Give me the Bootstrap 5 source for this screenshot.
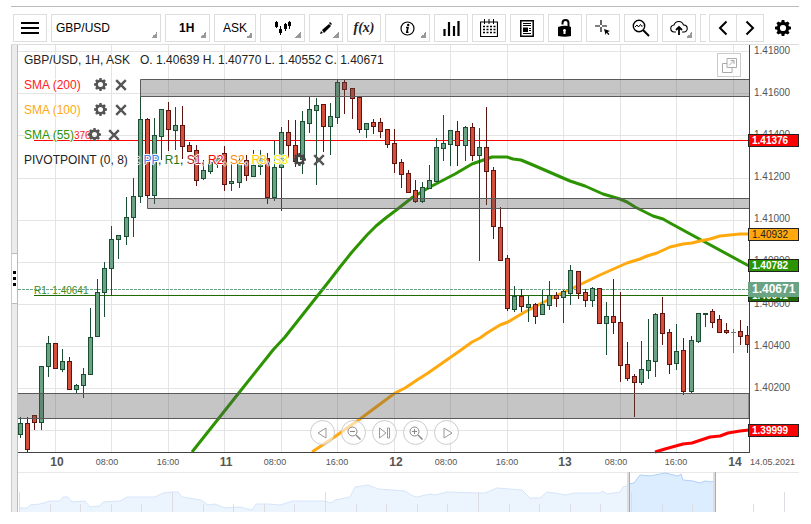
<!DOCTYPE html>
<html lang="en">
<head>
<meta charset="utf-8">
<meta name="viewport" content="width=device-width, initial-scale=1">
<title>GBP/USD chart</title>
<link href="https://cdn.jsdelivr.net/npm/bootstrap@5.3.0/dist/css/bootstrap.min.css" rel="stylesheet">
<style>
body{font-family:"Liberation Sans",Arial,sans-serif;font-size:12px;line-height:14px;color:#222;background:#fff}
.app{margin:6px 12px 0 11px;border-top:1px solid #bbb}
.bar{padding:7px 0 2px 2px;border-bottom:1px solid #ddd}
.tools{gap:4px;min-width:0}
.tool{flex:none;width:34px;height:28px;border:1px solid #ddd;background-color:#fff;padding:0;font-size:12px;color:#000;border-radius:0;display:flex;align-items:center;justify-content:center}
.tool svg{display:block}
.drop{background-image:linear-gradient(135deg,transparent 50%,#999 50%);background-repeat:no-repeat;background-position:right 3px bottom 3px;background-size:6px 6px}
select.tool{appearance:none;cursor:pointer}
.w-pair{width:110px;padding-left:4px}
.w-period{width:45px;padding-left:13px;font-weight:700}
.w-side{width:42px;padding-left:8px}
.w-wide{width:45px}
.fx{font:italic 700 14px "Liberation Serif",serif;color:#222}
.pager{margin-left:3px}
.pager .tool{width:28px}
.pager .tool+.tool{border-left:0;width:27px}
.gear-btn{border:0;background:none;padding:0;margin:0 8px 0 11px;width:16px;height:28px;display:flex;align-items:center}
.side{width:7px;background:#ececec;border-left:1px solid #ccc;border-right:1px solid #bbb}
.grip{width:5px;height:51px;border:0;border-top:1px solid #bbb;border-bottom:1px solid #bbb;background:#fff;padding:0;gap:3px;display:flex;flex-direction:column;align-items:center;justify-content:center}
.grip i{width:3px;height:3px;background:#000}
.chart{display:block;width:100%;height:auto}
.legend{left:6px;top:2px}
.legend .line{height:25px;display:flex;align-items:center;white-space:pre;text-shadow:1px 0 #fff,-1px 0 #fff,0 1px #fff,0 -1px #fff,0 0 2px #fff,0 0 2px #fff}
.legend button{border:0;background:none;padding:0;width:14px;height:14px;display:flex;align-items:center;justify-content:center}
.legend .acts{display:flex;gap:6px}
.g13{gap:13px}.g5{gap:4px}.g9{gap:9px}
.sma-r{color:#f22}.sma-o{color:#ffa90e}.sma-g{color:#2c9400}
.pp{color:#3c80ee}.r1{color:#277310}.s1{color:#b22020}.r2{color:#f00}.s2{color:#ff8c00}.r3{color:#ffc800}.s3{color:#fff000}
.pop{top:8px;right:58px;width:24px;height:24px;border:1px solid #ccc;background:#fffc;padding:0;display:flex;align-items:center;justify-content:center}
.play{left:0;right:48px;bottom:67px;gap:6px}
.play button{width:25px;height:25px;border:1px solid #ccc;border-radius:50%;background:#fff9;padding:0;display:flex;align-items:center;justify-content:center}
</style>
<script src="https://cdn.jsdelivr.net/npm/bootstrap@5.3.0/dist/js/bootstrap.bundle.min.js"></script>
</head>
<body>
<svg class="d-none" xmlns="http://www.w3.org/2000/svg">
<symbol id="gear" viewBox="0 0 16 16"><path fill-rule="evenodd" d="M6.700 0h2.600l.4 2.100 1.200.5L12.700 1.400l1.900 1.900-1.200 1.800.5 1.200 2.100.4v2.600l-2.100.4-.5 1.200 1.200 1.800-1.900 1.900-1.800-1.200-1.200.5-.4 2.100H6.700l-.4-2.100-1.200-.5-1.800 1.200-1.900-1.900 1.200-1.800-.5-1.200L0 9.300V6.700l2.100-.4.5-1.200L1.400 3.300l1.900-1.900 1.800 1.200 1.200-.5zM8 4.900a3.100 3.100 0 1 0 0 6.200 3.100 3.100 0 0 0 0-6.200z"/></symbol>
<symbol id="cross" viewBox="0 0 12 12"><path d="M1.200 1.200l9.600 9.600M10.800 1.200L1.200 10.800" stroke="#555" stroke-width="2.400"/></symbol>
</svg>
<div class="app">
<header class="bar d-flex align-items-center">
<div class="tools d-flex flex-grow-1 overflow-hidden">
<button class="tool" aria-label="Menu"><svg width="18" height="14"><path d="M0 2h18M0 7h18M0 12h18" stroke="#000" stroke-width="2"/></svg></button>
<select class="tool drop w-pair" aria-label="Instrument"><option>GBP/USD</option></select>
<select class="tool drop w-period" aria-label="Period"><option>1H</option></select>
<select class="tool drop w-side" aria-label="Price side"><option>ASK</option></select>
<button class="tool drop w-wide" aria-label="Chart type"><svg width="18" height="14"><path d="M2.500 0v7M6.500 5v9M11.500 2v8M15.500 0v8" stroke="#000"/><path d="M1 1h3v5H1zM5 8h3v4H5zM10 3h3v5h-3zM14 1h3v4h-3z"/></svg></button>
<button class="tool drop" aria-label="Draw"><svg width="14" height="14"><path d="M1 13l1-3 2 2zM3 9l7-6 2 2-7 7z"/><path d="M10 2l1-1 2 2-1 1z"/></svg></button>
<button class="tool" aria-label="Functions"><em class="fx">f(x)</em></button>
<button class="tool drop w-wide" aria-label="Information"><svg width="15" height="15" viewBox="0 0 15 15"><circle cx="7.500" cy="7.500" r="6.500" fill="none" stroke="#000" stroke-width="1.200"/><path d="M6 6.500h2L6.800 11.200h1.700" fill="none" stroke="#000" stroke-width="1.600"/><circle cx="8.200" cy="3.900" r="1.200"/></svg></button>
<button class="tool" aria-label="Volume"><svg width="18" height="18"><path d="M2.500 10v7M7 3v14M12 7v10M16.500 2v15" stroke="#000" stroke-width="2.200"/></svg></button>
<button class="tool" aria-label="Calendar"><svg width="18" height="18"><path d="M.5 3h17v14.500H.5z" fill="none" stroke="#000" stroke-width="1.200"/><path d="M4.500 0v5M9 0v5M13.500 0v5" stroke="#000"/><path d="M3 7.500h13M3 10.500h13M3 13.500h13" stroke="#000" stroke-width="1.500" stroke-dasharray="2 1.500"/></svg></button>
<button class="tool" aria-label="News"><svg width="14" height="17"><path d="M.8.8h12.400v15.400H.8z" fill="none" stroke="#000" stroke-width="1.500"/><path d="M3 3.500h8M3 5.500h8M9 8.500h2M9 10.500h2M3 13.500h8" stroke="#000"/><path d="M3 7.500h5v4.500H3z"/></svg></button>
<button class="tool" aria-label="Unlock"><svg width="14" height="18"><path fill-rule="evenodd" d="M0 8q7-2.500 13 0v9q-6 1.500-13 0zM6.500 10a1.500 1.500 0 0 0-1 2.600V15h2v-2.400a1.500 1.500 0 0 0-1-2.600z"/><path d="M10.500 8V4a3 3 0 0 0-6 0V5.500" fill="none" stroke="#000" stroke-width="2"/></svg></button>
<button class="tool" aria-label="Crosshair"><svg width="16" height="16"><path d="M6 0v5M6 7v5M0 6h5M7 6h5" stroke="#000" stroke-width="1.200"/><path d="M9 9l6 2-2.400.9 1.900 2.300-1 .8-2-2.300L10.600 15z"/></svg></button>
<button class="tool" aria-label="Scan"><svg width="18" height="18"><circle cx="7" cy="7" r="5.700" fill="none" stroke="#000" stroke-width="1.400"/><path d="M3 8l2-2 1.500 2L8.500 5.500 10 7.500l1-1" fill="none" stroke="#000"/><path d="M11 11l6 6" stroke="#000" stroke-width="2"/></svg></button>
<button class="tool drop" aria-label="Upload"><svg width="18" height="16"><path d="M6 12H4.500A3.500 3.500 0 0 1 4 5a5 5 0 0 1 9.500 0 3.500 3.500 0 0 1 .5 7h-2" fill="none" stroke="#000" stroke-width="1.100"/><path d="M9 15V8M6 10l3-3 3 3" fill="none" stroke="#000" stroke-width="1.800"/></svg></button>
<button class="tool" aria-label="More"></button>
</div>
<div class="pager d-flex">
<button class="tool" aria-label="Previous"><svg width="10" height="16"><path d="M8.500 1.500L2 8l6.500 6.500" fill="none" stroke="#000" stroke-width="2"/></svg></button>
<button class="tool" aria-label="Next"><svg width="10" height="16"><path d="M1.500 1.500L8 8l-6.500 6.500" fill="none" stroke="#000" stroke-width="2"/></svg></button>
</div>
<button class="gear-btn" aria-label="Settings"><svg width="16" height="16"><use href="#gear"/></svg></button>
</header>
<main class="d-flex">
<div class="side d-flex align-items-center"><button class="grip" aria-label="Expand panel"><i></i><i></i><i></i></button></div>
<div class="position-relative flex-grow-1">
<svg class="chart" viewBox="18 45 781 467" font-family="Liberation Sans, Arial, sans-serif" role="img" aria-label="GBP/USD hourly candles">
<g id="grid"></g>
<path d="M34 140.500H749" stroke="#f00"/><text x="74" y="139" font-size="10" fill="#f22">376</text>
<path d="M34 295.500H749" stroke="#1f6a04"/>
<text x="34" y="294" font-size="10" fill="#3c8a20">R1. 1.40641</text>
<g fill="none" stroke-width="3" stroke-linejoin="round">
<path stroke="#2c9400" d="M192 452L238 394 273 350 285 337 315 299 330 280 340 267 352 252 367 235 376 226 387 217 395 211 413 197 430 187 455 174 472 164 492 157H507L513 159 521 160 533 165 570 181 585 186 603 194 620 199 627 202 635 207 653 216 663 219 670 223 749 266"/>
<path stroke="#ffa90e" d="M312 452L333 438 360 419 395 393 405 388 417 380 428 373 461 350 472 342 480 338 487 333 500 325 508 322 523 313 540 304 560 294 573 288 600 275 627 263 640 259 647 256 657 253 670 247 683 244 692 243 700 241 710 239 720 236 740 234H749"/>
<path stroke="#f00" d="M655 452L665 449 683 444 692 443 710 437 720 436 728 433 740 431 749 430"/>
</g>
<path d="M18 289.500H749" stroke="#6aa384" stroke-dasharray="3 1"/>
<g id="candles"></g>
<g fill="#555" fill-opacity=".34" stroke="#5a5a5a"><path d="M749 79.500H140.500V96.500H749"/><path d="M749 198.500H147.500V208.500H749"/><path d="M18 393.500H749V418.500H18"/></g>
<path d="M749.500 45V452.500M18 452.500H750" stroke="#444"/>
<g id="labels" fill="#555"></g>
<g id="tags"></g>
<g id="overview"></g>
</svg>
<div class="legend position-absolute">
<div class="line">GBP/USD, 1H, ASK   O. 1.40639 H. 1.40770 L. 1.40552 C. 1.40671</div>
<div class="line g13 sma-r"><span>SMA (200)</span><span class="acts"><button aria-label="Set up SMA 200"><svg width="13" height="13" fill="#555"><use href="#gear"/></svg></button><button aria-label="Remove SMA 200"><svg width="12" height="12"><use href="#cross"/></svg></button></span></div>
<div class="line g13 sma-o"><span>SMA (100)</span><span class="acts"><button aria-label="Set up SMA 100"><svg width="13" height="13" fill="#555"><use href="#gear"/></svg></button><button aria-label="Remove SMA 100"><svg width="12" height="12"><use href="#cross"/></svg></button></span></div>
<div class="line g13 sma-g"><span>SMA (55)</span><span class="acts"><button aria-label="Set up SMA 55"><svg width="13" height="13" fill="#555"><use href="#gear"/></svg></button><button aria-label="Remove SMA 55"><svg width="12" height="12"><use href="#cross"/></svg></button></span></div>
<div class="line g9"><span>PIVOTPOINT (0, 8)</span><span class="d-flex g5 align-items-center"><span>: <span class="pp">PP</span>, <span class="r1">R1</span>, <span class="s1">S1</span>, <span class="r2">R2</span>, <span class="s2">S2</span>, <span class="r3">R3</span>, <span class="s3">S3</span></span><span class="acts"><button aria-label="Set up pivot points"><svg width="13" height="13" fill="#444"><use href="#gear"/></svg></button><button aria-label="Remove pivot points"><svg width="12" height="12"><use href="#cross"/></svg></button></span></span></div>
</div>
<button class="pop position-absolute" aria-label="Detach chart"><svg width="15" height="15" fill="none" stroke="#aaa"><path d="M5 .5h9.500v9H5zM5 5.500H.5v9H10v-5M7 7.500l5-5M8.500 2.500H12V6"/></svg></button>
<div class="play position-absolute d-flex justify-content-center">
<button aria-label="Back"><svg width="12" height="12" fill="none" stroke="#999"><path d="M9 1v10L1 6z"/></svg></button>
<button aria-label="Zoom out"><svg width="14" height="14" fill="none" stroke="#888"><circle cx="5.500" cy="5.500" r="4.500"/><path d="M3 5.500h5"/><path d="M9 9l4.500 4.500" stroke-width="1.500"/></svg></button>
<button aria-label="Latest"><svg width="12" height="12" fill="none" stroke="#999"><path d="M.5 1v10L7 6zM8.500 1h2v10h-2z"/></svg></button>
<button aria-label="Zoom in"><svg width="14" height="14" fill="none" stroke="#888"><circle cx="5.500" cy="5.500" r="4.500"/><path d="M3 5.500h5M5.500 3v5"/><path d="M9 9l4.500 4.500" stroke-width="1.500"/></svg></button>
<button aria-label="Forward"><svg width="12" height="12" fill="none" stroke="#999"><path d="M3 1v10l8-5z"/></svg></button>
</div>
</div>
</main>
</div>
<script>
const put=(id,s)=>document.getElementById(id).innerHTML=s;
// Grid
let g='';
[51,93,135,178,220,262,304,346,388,430].forEach(y=>g+=`<path d="M18 ${y}.5H749"/>`);
[55,111,168,224,281,337,394,450,507,563,620,676,733].forEach(x=>g+=`<path d="M${x}.5 45V452"/>`);
put('grid',`<g stroke="#e4e4e4">${g}</g>`);
// Candles: direction, high, body top, body bottom, low
const data=`g417,423,435,438 r417,423,450,452 r415,415,423,430 g366,366,423,430 g336,343,367,377 r343,343,369,369 g349,361,370,372 r357,361,390,390 g384,385,390,393 g368,374,386,398
g308,337,375,375 g279,292,337,337 g262,268,293,317 g226,239,269,295 g235,235,240,259 g197,217,237,245 g178,196,218,237 g96,119,197,203 r118,119,196,198 g118,135,196,204
g109,109,137,160 r102,110,130,151 g107,125,131,150 r106,125,147,159 r142,145,152,152 r145,150,181,186 g160,170,179,180 g158,162,172,174 g155,158,165,168 r146,153,185,191
g164,181,184,191 g155,160,183,188 r155,160,176,181 g150,165,177,177 g150,158,167,175 r153,158,198,204 g141,167,198,201 g127,132,168,211 r120,132,146,158 r120,145,162,167
g111,121,160,174 g97,109,124,133 g98,105,111,185 r104,104,127,152 g103,116,127,155 g80,82,118,124 r80,82,90,114 r88,88,99,119 r97,97,130,133 g123,123,130,138
r119,122,127,134 r118,122,132,138 r129,129,145,148 r129,143,164,173 r159,162,175,188 r170,173,193,193 r180,190,202,203 g182,187,202,203 g165,180,189,189 g138,147,182,182
g115,143,149,161 g130,130,145,166 r121,131,146,166 g126,127,146,161 r123,127,156,161 g128,147,156,261 r107,147,172,205 r167,170,227,239 r207,227,261,261 r255,258,309,311
g286,296,310,312 r289,296,307,312 g296,304,308,322 r303,304,317,324 g290,304,315,315 g281,295,306,310 r292,295,299,307 g290,291,298,323 g265,270,294,305 r271,271,294,299
r289,292,301,307 g287,288,301,307 r288,288,324,324 g302,316,324,355 r279,316,323,334 r292,322,366,382 r342,364,379,381 r374,376,383,417 g341,369,383,385 g319,360,371,379
g313,314,362,377 r297,313,334,345 r329,332,365,374 g324,351,364,370 r338,350,392,395 g336,340,392,393 g313,313,342,343 g313,313,315,327 r309,311,323,328 r315,319,333,333
r323,330,333,334 n329,332,333,353 r320,331,337,345 r326,335,345,353`.split(/\s+/);
const ink={g:['#6aa384','#1b4d33'],r:['#d44e3c','#5e1410'],n:['#777','#777']};
put('candles',data.map((d,i)=>{
const [f,s]=ink[d[0]],[h,t,b,l]=d.slice(1).split(',').map(Number),x=20+7*i+Math.floor((i+1)/16);
const w=`<path d="M${x}.5 ${h}V${l}" stroke="${s}"/>`;
if(d[0]==='n')return w+`<path d="M${x-2} 332.5H${x+3}" stroke="${s}"/>`;
const wd=Math.min(4,749-x+1.5);
return w+`<rect x="${x-1.5}" y="${t+.5}" width="${wd}" height="${b-t-1}" fill="${f}" stroke="${s}"/>`;
}).join(''));
// Axis labels
let a='';
[[54,'1.41800'],[96,'1.41600'],[138,'1.41400'],[180,'1.41200'],[222,'1.41000'],[264,'1.40800'],[307,'1.40600'],[349,'1.40400'],[391,'1.40200']].forEach(([y,t])=>a+=`<text x="754" y="${y}" font-size="10">${t}</text>`);
[[57,'10'],[107,'08:00'],[168,'16:00'],[226,'11'],[275,'08:00'],[337,'16:00'],[396,'12'],[446,'08:00'],[507,'16:00'],[565,'13'],[616,'08:00'],[676,'16:00'],[735,'14']].forEach(([x,t])=>a+=t.length<3?`<text x="${x}" y="466" font-size="12" font-weight="700" text-anchor="middle">${t}</text>`:`<text x="${x}" y="465" font-size="9" text-anchor="middle">${t}</text>`);
put('labels',a+'<text x="750" y="465" font-size="9">14.05.2021</text>');
// Price tags
const tag=(y,t,f,c,w)=>`<rect x="748.500" y="${y+.5}" width="50" height="12" fill="${f}" stroke="#222"/><text x="752" y="${y+10}" font-size="10" font-weight="${w}" fill="${c}">${t}</text>`;
put('tags',tag(134,'1.41376','#f00','#fff',700)+tag(228,'1.40932','#ffa90e','#222',400)+tag(259,'1.40782','#2c9400','#fff',700)+tag(289,'1.40641','#1f6a04','#fff',700)+'<rect x="748" y="282" width="51" height="15" fill="#6aa384"/><text x="752" y="293" font-size="12" font-weight="700" fill="#fff">1.40671</text>'+tag(424,'1.39999','#f00','#fff',700));
// Overview strip
const p1='20 508 27 508 30 505 40 504 50 501 60 501 63 497 68 497 72 502 85 501 90 507 100 506 103 502 120 501 127 497 155 497 163 493 173 492 178 492 182 497 195 499 201 500 208 505 215 504 225 508 240 507 252 510 256 504 268 504 280 505 293 501 325 501 331 503 335 500 350 497 355 487 368 485 378 489 405 491 413 496 417 497 430 494 435 495 447 492 478 493 485 493 497 488 522 490 530 498 540 498 547 492 555 493 565 495 575 493 600 493 602 491 607 494 620 492 623 487 629 485';
const p2='629 484 634 483 640 475 650 476 665 473 678 476 681 474 683 480 693 481 700 483 705 481 712 482 714 480';
let k='';
for(let i=0;i<26;i++){if(i===23)continue;k+=`<path d="M${Math.round(19+i*30.6)}.5 ${i%5?504:492}V512"/>`}
put('overview',`<path d="M18 472.500H799" stroke="#e8e8e8"/><path d="M20 512L${p1} 629 512z" fill="#ecf5fe"/><path d="M${p1}" fill="none" stroke="#d5e5fa"/><path d="M629 512L${p2} 714 512z" fill="#dcedff"/><path d="M${p2}" fill="none" stroke="#b0d0f8"/><g stroke="#dcdce2">${k}</g><path d="M628 472V512M714 472V512" stroke="#ddd" stroke-width="2"/><path d="M629.500 472V512M715.500 472V512" stroke="#aaa"/>`);
</script>
</body>
</html>
